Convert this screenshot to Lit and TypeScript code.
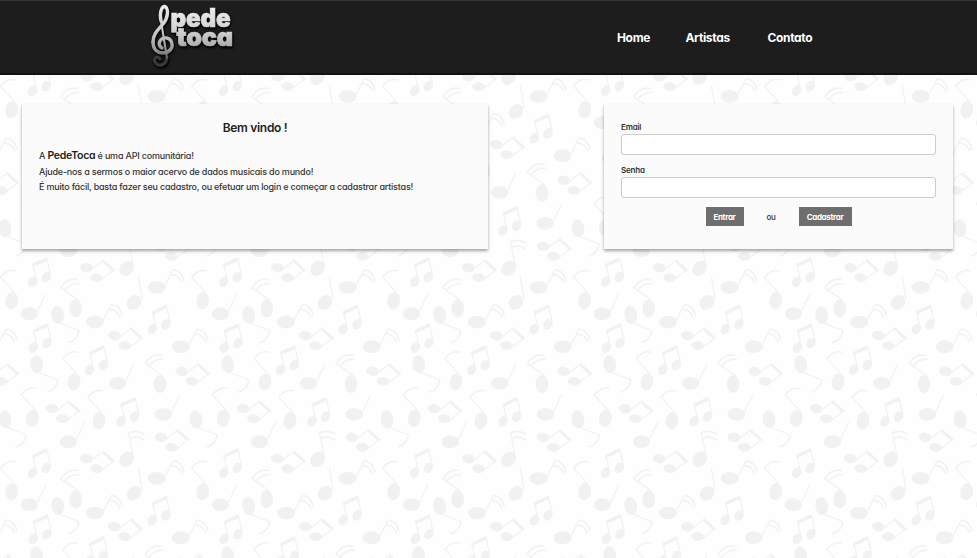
import { LitElement, html, svg, css } from "lit";
import { customElement } from "lit/decorators.js";

const TILE = 573;

/* Every glyph is drawn around the centre of its first note head. */
const GLYPHS: Record<string, { shape: unknown; at: number[][] }> = {
  beamed: {
    shape: svg`<ellipse rx="13" ry="17" transform="rotate(32)"/><ellipse cx="41" cy="-14" rx="13" ry="17" transform="rotate(32 41 -14)"/>
      <path class="line" d="M10-8L1-51M53-22L42-72"/><path d="M-2-53L42-73V-62L0-43Z"/>`,
    at: [[98, 80], [100, 278], [269, 344], [457, 222], [363, 499]],
  },
  diamond: {
    shape: svg`<ellipse rx="19" ry="14" transform="rotate(8)"/><ellipse cx="31" cy="30" rx="19" ry="13" transform="rotate(5 31 30)"/>
      <path class="line" d="M14 6L50-22M46 35L82 7"/><path d="M50-26L87 7L79 12L48-17Z"/>`,
    at: [[259, 38], [343, 242], [545, 349], [156, 461], [483, 547]],
  },
  doubleRight: {
    shape: svg`<ellipse rx="27" ry="19"/><path class="line" d="M24-4L50-54"/>
      <path class="flag" d="M50-53Q76-50 82-18M43-38Q66-38 75-14"/>`,
    at: [[470, 97], [285, 201], [542, 275]],
  },
  quarter: {
    shape: svg`<ellipse rx="20" ry="24" transform="rotate(48)"/><path class="line" d="M24-10L13-77"/>`,
    at: [[402, 142]],
  },
  doubleUp: {
    shape: svg`<ellipse rx="20" ry="25" transform="rotate(42)"/><path class="line" d="M19-11L5-80"/>
      <path class="flag" d="M3-78Q26-91 53-75M8-61Q30-75 52-57"/>`,
    at: [[380, 613]],
  },
  plain: {
    shape: svg`<ellipse rx="26" ry="19"/><path class="line" d="M24-6L49-59"/>`,
    at: [[88, 176], [353, 385], [490, 478], [205, 560]],
  },
  hook: {
    shape: svg`<ellipse rx="19" ry="26" transform="rotate(10)"/><path class="line" d="M8-25L-33-70"/>
      <path class="flag" d="M-34-69Q-14-97 12-89"/>`,
    at: [[35, 137], [222, 381], [97, 490], [297, 497]],
  },
  doubleHook: {
    shape: svg`<ellipse rx="19" ry="27"/><path class="line" d="M9-24L-45-62"/>
      <path class="flag" d="M-45-61Q-24-94 7-86M-34-53Q-15-78 12-74"/>`,
    at: [[227, 160], [480, 387]],
  },
  falling: {
    shape: svg`<ellipse rx="19" ry="27" transform="rotate(-8)"/><path class="line" d="M8 25L64 47"/>
      <path class="flag" d="M64 46Q59 76 32 83"/>`,
    at: [[173, 180], [110, 328], [15, 493]],
  },
};

const wrapped = (x: number, y: number) =>
  [-TILE, 0, TILE].flatMap((dx) => [-TILE, 0, TILE].map((dy) => [x + dx, y + dy]))
    .filter(([a, b]) => a > -110 && a < TILE + 110 && b > -110 && b < TILE + 110);

@customElement("note-wallpaper")
class NoteWallpaper extends LitElement {
  static styles = css`
    :host { display: block; }
    svg { display: block; width: 100%; height: 100%; }
    .notes { fill: #f1f1f1; }
    .line { fill: none; stroke: #f2f2f2; stroke-width: 4; }
    .flag { fill: none; stroke: #f2f2f2; stroke-width: 5; }
  `;
  render() {
    return html`<svg aria-hidden="true">
      <defs>
        <pattern id="tile" y="64" width="191" height="191" patternUnits="userSpaceOnUse">
          <g class="notes" transform="scale(.33333)">
            ${Object.values(GLYPHS).map((g) => g.at.flatMap(([x, y]) => wrapped(x, y)).map(([x, y]) =>
              svg`<g transform="translate(${x} ${y})">${g.shape}</g>`))}
          </g>
        </pattern>
      </defs>
      <rect width="100%" height="100%" fill="url(#tile)"/>
    </svg>`;
  }
}

@customElement("brand-logo")
class BrandLogo extends LitElement {
  static styles = css`
    :host { display: block; width: 90px; height: 72px; }
    svg { display: block; overflow: visible; }
    text { font: 900 26px "Inter", "Open Sans", sans-serif; font-feature-settings: "cv11"; fill: url(#word); stroke: url(#word); stroke-width: .7; }
    .raised { filter: drop-shadow(1px 1.5px 0 #060606) drop-shadow(0 1px 1px #000); }
    .line { fill: none; stroke: url(#metal); stroke-width: 2; stroke-linecap: round; }
    .thick { stroke-width: 3.4; }
    .curl { fill: none; stroke: #3a3a3a; stroke-width: 3; stroke-linecap: round; }
  `;
  render() {
    return html`<svg width="90" height="72" viewBox="0 0 90 72">
      <defs>
        <linearGradient id="word" gradientUnits="userSpaceOnUse" x1="0" y1="6" x2="0" y2="48">
          <stop offset="0" stop-color="#f0f0f0"/><stop offset=".6" stop-color="#cfcfcf"/><stop offset="1" stop-color="#a6a6a6"/>
        </linearGradient>
        <linearGradient id="metal" gradientUnits="userSpaceOnUse" x1="0" y1="4" x2="0" y2="66">
          <stop offset="0" stop-color="#ececec"/><stop offset=".5" stop-color="#c2c2c2"/><stop offset=".72" stop-color="#999"/><stop offset="1" stop-color="#262626"/>
        </linearGradient>
      </defs>
      <g class="raised"><text x="21.5" y="26" textLength="60" lengthAdjust="spacingAndGlyphs">pede</text></g>
      <g class="raised"><text x="27.5" y="45" textLength="56.5" lengthAdjust="spacingAndGlyphs">toca</text></g>
      <g class="raised">
        <path class="curl" d="M18 56C18 64 9 67 6 61C4 57 9 54 11 58"/>
        <path class="line" d="M12 20L18 57"/>
        <path class="line thick" d="M12 20C10 11 13 5 16 5.500C20 8 19 17 14 23C9 29 4 33 4 41"/>
        <path class="line thick" d="M4 41C4 49 9 52 14 52C20 52 24 47 23 43C22 36 14 35 11 40C9 43 11 46 13 47"/>
      </g>
    </svg>`;
  }
}

@customElement("app-root")
class AppRoot extends LitElement {
  static styles = css`
    :host {
      display: block; position: relative; height: 558px; overflow: hidden; background: #fefefe; color: #333;
      font-family: "Inter", "Lato", sans-serif; font-feature-settings: "cv11"; font-size: 9px; letter-spacing: -.2px;
    }
    * { box-sizing: border-box; }
    note-wallpaper { position: absolute; inset: 0; }
    header { position: relative; height: 75px; padding-left: 149px; display: flex; background: #1d1d1d; border-top: 1px solid #343434; border-bottom: 2px solid #111; }
    nav { margin-left: 378px; padding-top: 28px; display: flex; gap: 37px; font-size: 12px; line-height: 18px; font-weight: 700; letter-spacing: -.34px; color: #fff; }
    .home { width: 31.5px; }
    .artists { width: 45px; }
    main { position: relative; display: flex; justify-content: space-between; padding: 29px 24px 0 22px; }
    section { height: 145px; background: #fbfbfb; box-shadow: 0 2px 3px rgba(0,0,0,.36); padding: 0 17px; }
    .welcome { width: 466px; }
    .login { width: 349px; }
    h1 { margin: 15px 0 11px; font-size: 12px; line-height: 18px; font-weight: 600; letter-spacing: -.3px; text-align: center; color: #222; }
    p { margin: 0; line-height: 15px; font-weight: 500; white-space: nowrap; }
    .first { line-height: 16px; }
    .third { letter-spacing: -.21px; }
    strong { font-size: 10.5px; font-weight: 600; letter-spacing: -.25px; color: #222; }
    label { display: block; font-size: 8px; line-height: 12px; font-weight: 600; margin-bottom: 1px; }
    .email { margin-top: 17px; }
    .senha { margin-top: 9px; }
    input { display: block; width: 100%; height: 21px; border: 1px solid #ccc; border-radius: 3px; background: #fff; margin: 0; padding: 0 8px; font: inherit; }
    .actions { display: flex; justify-content: center; align-items: center; margin-top: 9px; font-size: 8px; font-weight: 500; }
    button { height: 19px; border: 0; background: #6e6e6e; color: #fff; padding: 0; font: 700 8px "Inter", sans-serif; font-feature-settings: "cv11"; letter-spacing: -.35px; }
    .enter { width: 38px; }
    .join { width: 53px; }
    .or { width: 55px; text-align: center; }
  `;
  render() {
    return html`
      <note-wallpaper></note-wallpaper>
      <header>
        <brand-logo></brand-logo>
        <nav><span class="home">Home</span><span class="artists">Artistas</span><span class="contact">Contato</span></nav>
      </header>
      <main>
        <section class="welcome">
          <h1>Bem vindo !</h1>
          <p class="first">A <strong>PedeToca</strong> é uma API comunitária!</p>
          <p class="second">Ajude-nos a sermos o maior acervo de dados musicais do mundo!</p>
          <p class="third">É muito fácil, basta fazer seu cadastro, ou efetuar um login e começar a cadastrar artistas!</p>
        </section>
        <section class="login">
          <label class="email" for="email">Email</label><input id="email" type="email">
          <label class="senha" for="senha">Senha</label><input id="senha" type="password">
          <div class="actions"><button class="enter">Entrar</button><span class="or">ou</span><button class="join">Cadastrar</button></div>
        </section>
      </main>`;
  }
}
